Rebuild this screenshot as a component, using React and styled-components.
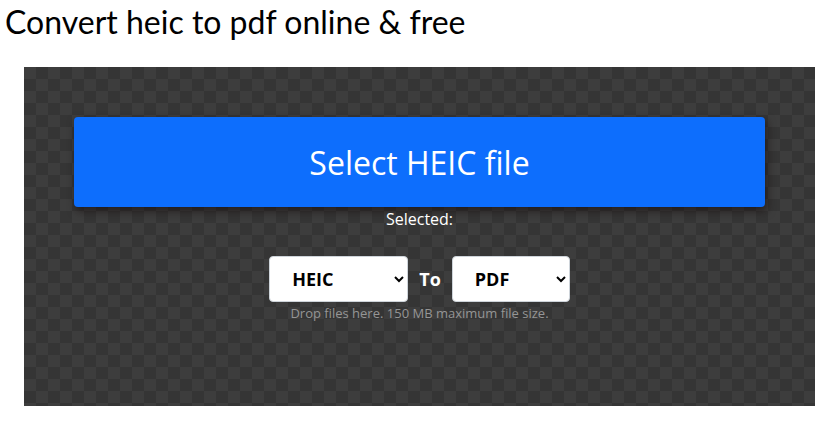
import React, { useState } from "react";
import styled, { createGlobalStyle } from "styled-components";

const GlobalStyle = createGlobalStyle`
  body {
    margin: 0;
    background: #ffffff;
    font-family: "Open Sans", "Liberation Sans", sans-serif;
  }
`;

function App() {
  const [from, setFrom] = useState("heic");
  const [to, setTo] = useState("pdf");

  return (
    <Page>
      <GlobalStyle />
      <Title>Convert heic to pdf online &amp; free</Title>
      <DropZone>
        <SelectButton type="button">Select HEIC file</SelectButton>
        <Selected>Selected:</Selected>
        <FormatRow>
          <FormatSelect width={139} value={from} onChange={(e) => setFrom(e.target.value)}>
            <option value="heic">HEIC</option>
            <option value="heif">HEIF</option>
          </FormatSelect>
          <ToLabel>To</ToLabel>
          <FormatSelect width={118} value={to} onChange={(e) => setTo(e.target.value)}>
            <option value="pdf">PDF</option>
            <option value="jpg">JPG</option>
            <option value="png">PNG</option>
          </FormatSelect>
        </FormatRow>
        <Hint>Drop files here. 150 MB maximum file size.</Hint>
      </DropZone>
    </Page>
  );
}

const Page = styled.div`
  width: 836px;
  height: 424px;
  overflow: hidden;
`;

const Title = styled.h1`
  margin: 0;
  padding: 3px 0 0 5px;
  height: 67px;
  box-sizing: border-box;
  font-family: "Lato", "Liberation Sans", sans-serif;
  font-weight: 400;
  font-size: 32px;
  line-height: 38px;
  color: #000;
`;

const DropZone = styled.div`
  margin-left: 24px;
  width: 791px;
  height: 339px;
  box-sizing: border-box;
  padding: 50px 50px 0;
  display: flex;
  flex-direction: column;
  align-items: center;
  background-color: #3d3d3d;
  background-image: repeating-conic-gradient(#353535 0 25%, #3d3d3d 0 50%);
  background-size: 24px 24px;
`;

const SelectButton = styled.button`
  width: 100%;
  height: 90px;
  border: none;
  border-radius: 4px;
  background: #0d6efd;
  color: #fff;
  font-family: "Open Sans", "Liberation Sans", sans-serif;
  font-size: 32px;
  box-shadow: 2px 4px 8px rgba(20, 10, 10, 0.6);
  cursor: pointer;
`;

const Selected = styled.div`
  margin-top: 1px;
  color: #fff;
  font-size: 16px;
  line-height: 22px;
`;

const FormatRow = styled.div`
  margin-top: 26px;
  display: flex;
  align-items: center;
  gap: 11px;
`;

const FormatSelect = styled.select`
  width: ${(p) => p.width}px;
  height: 46px;
  padding: 0 6px 0 18px;
  border: 1px solid #ced4da;
  border-radius: 4px;
  background: #fff;
  color: #000;
  font-family: "Open Sans", "Liberation Sans", sans-serif;
  font-weight: 700;
  font-size: 18px;
`;

const ToLabel = styled.span`
  color: #fff;
  font-weight: 700;
  font-size: 18px;
`;

const Hint = styled.div`
  margin-top: 2px;
  color: #959595;
  font-size: 13px;
  line-height: 18px;
`;

export default App;
